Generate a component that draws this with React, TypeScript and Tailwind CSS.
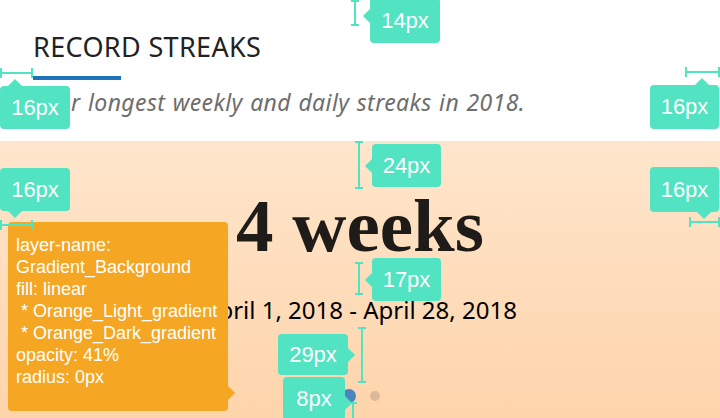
import React from "react";

function VBar({ className }: { className: string }) {
  return (
    <div className={`absolute w-[2px] bg-[#52e3c3] ${className}`}>
      <div className="absolute -left-[3px] top-0 w-[8px] h-[2px] bg-[#52e3c3]" />
      <div className="absolute -left-[3px] bottom-0 w-[8px] h-[2px] bg-[#52e3c3]" />
    </div>
  );
}

function HBar({ className }: { className: string }) {
  return (
    <div className={`absolute h-[2px] bg-[#52e3c3] ${className}`}>
      <div className="absolute -top-[4px] left-0 w-[2px] h-[10px] bg-[#52e3c3]" />
      <div className="absolute -top-[4px] right-0 w-[2px] h-[10px] bg-[#52e3c3]" />
    </div>
  );
}

function Tag({
  className,
  label,
  arrowClass,
}: {
  className: string;
  label: string;
  arrowClass: string;
}) {
  return (
    <div
      className={`absolute rounded-[4px] bg-[#52e3c3] flex items-center justify-center text-white text-[22px] leading-none font-['Liberation_Sans',Arial,sans-serif] ${className}`}
    >
      <div className={`absolute w-[10px] h-[10px] rotate-45 bg-[#52e3c3] ${arrowClass}`} />
      <span className="relative">{label}</span>
    </div>
  );
}

export default function App() {
  return (
    <div className="relative w-[720px] h-[418px] overflow-hidden bg-white font-['Noto_Sans',sans-serif]">
      {/* Header */}
      <div className="h-[141px] px-[33px] pt-[31px]">
        <h1 className="text-[27px] leading-[32px] text-[#222222] font-normal tracking-[0.35px]">
          RECORD STREAKS
        </h1>
        <div className="mt-[13px] h-[4px] w-[88px] bg-[#1f73b9]" />
        <p className="mt-[7px] text-[23px] leading-[30px] italic text-[#6d6d6d] tracking-[0.4px] [word-spacing:1px] whitespace-nowrap">
          Your longest weekly and daily streaks in 2018.
        </p>
      </div>

      {/* Gradient body */}
      <div className="h-[277px] bg-gradient-to-b from-[#fee6cc] to-[#fed4ab] flex flex-col items-center pt-[47px]">
        <div className="text-[75px] leading-[76px] font-bold text-[#1e1b18] font-['Liberation_Serif',serif]">
          4 weeks
        </div>
        <div className="mt-[30px] text-[24px] leading-[32px] text-black">
          April 1, 2018 - April 28, 2018
        </div>
        <div className="mt-[63px] flex items-center gap-[14px] pl-[2px]">
          <div className="w-[14px] h-[14px] rounded-full bg-[#4a86bd]" />
          <div className="w-[10px] h-[10px] rounded-full bg-[#dcb999]" />
        </div>
      </div>

      {/* Spec tooltip */}
      <div className="absolute left-[8px] top-[222px] w-[220px] h-[189px] rounded-[4px] bg-[#f5a623] pl-[8px] pt-[12px] text-white text-[18px] leading-[22px] font-['Liberation_Sans',Arial,sans-serif] whitespace-pre">
        <div className="absolute -right-[5px] top-[166px] w-[10px] h-[10px] rotate-45 bg-[#f5a623]" />
        <div className="relative">
          <div>layer-name:</div>
          <div>Gradient_Background</div>
          <div>fill: linear</div>
          <div>{" * Orange_Light_gradient"}</div>
          <div>{" * Orange_Dark_gradient"}</div>
          <div>opacity: 41%</div>
          <div>radius: 0px</div>
        </div>
      </div>

      {/* Measurement bars */}
      <VBar className="left-[354px] top-[0px] h-[26px]" />
      <VBar className="left-[358px] top-[141px] h-[48px]" />
      <VBar className="left-[358px] top-[262px] h-[33px]" />
      <VBar className="left-[361px] top-[327px] h-[56px]" />
      <VBar className="left-[352px] top-[402px] h-[20px]" />

      <HBar className="left-[0px] top-[72px] w-[33px]" />
      <HBar className="left-[685px] top-[71px] w-[35px]" />
      <HBar className="left-[0px] top-[224px] w-[33px]" />
      <HBar className="left-[689px] top-[221px] w-[31px]" />

      {/* Measurement tags */}
      <Tag className="left-[370px] top-[-2px] w-[70px] h-[45px]" label="14px" arrowClass="-left-[5px] top-[13px]" />
      <Tag className="left-[0px] top-[86px] w-[70px] h-[43px]" label="16px" arrowClass="-top-[5px] left-[10px]" />
      <Tag className="left-[650px] top-[85px] w-[69px] h-[44px]" label="16px" arrowClass="-top-[5px] left-[47px]" />
      <Tag className="left-[372px] top-[144px] w-[69px] h-[43px]" label="24px" arrowClass="-left-[5px] top-[17px]" />
      <Tag className="left-[0px] top-[168px] w-[70px] h-[43px]" label="16px" arrowClass="-bottom-[5px] left-[10px]" />
      <Tag className="left-[650px] top-[167px] w-[69px] h-[45px]" label="16px" arrowClass="-bottom-[5px] left-[49px]" />
      <Tag className="left-[372px] top-[258px] w-[69px] h-[43px]" label="17px" arrowClass="-left-[5px] top-[17px]" />
      <Tag className="left-[278px] top-[334px] w-[70px] h-[41px]" label="29px" arrowClass="-right-[5px] top-[16px]" />
      <Tag className="left-[283px] top-[377px] w-[62px] h-[43px]" label="8px" arrowClass="-right-[5px] top-[21px]" />
    </div>
  );
}
